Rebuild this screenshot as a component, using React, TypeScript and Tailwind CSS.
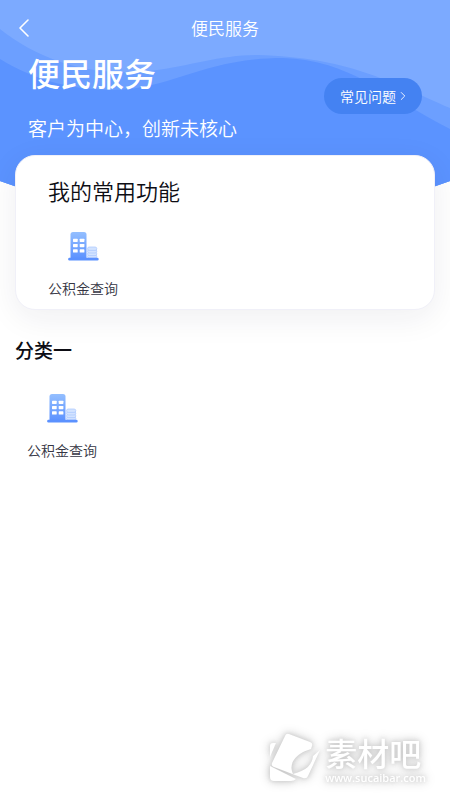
import { ChevronLeft, ChevronRight } from "lucide-react";

const favourites = ["公积金查询"]
const categories = [{ name: "分类一", services: ["公积金查询"] }]

function HeaderWaves() {
  return (
    <svg
      className="absolute inset-x-0 top-0 h-60 w-full"
      viewBox="0 0 450 240"
      preserveAspectRatio="none"
      aria-hidden="true"
    >
      <defs>
        <clipPath id="dome">
          <path d="M0 0H450V181Q340 222 225 222T0 181Z" />
        </clipPath>
      </defs>
      <g clipPath="url(#dome)">
        <rect width="450" height="240" fill="#7caaff" />
        <path
          d="M0 29C42 62 92 77 150 71C190 66 220 55 257 55C350 58 385 80 450 108V240H0Z"
          fill="#6c9fff"
        />
        <path
          d="M0 59C38 82 75 90 115 90C175 88 205 58 283 58C350 60 385 96 450 129V240H0Z"
          fill="#5b93ff"
        />
      </g>
    </svg>
  )
}

function BuildingIcon() {
  return (
    <svg width="32" height="32" viewBox="0 0 32 32" aria-hidden="true">
      <defs>
        <linearGradient id="tower" x1="0" y1="0" x2="0" y2="1">
          <stop offset="0" stopColor="#94bfff" />
          <stop offset="1" stopColor="#5b91ff" />
        </linearGradient>
      </defs>
      <path d="M3.5 29V4.5Q3.5 2 6 2H17Q19.5 2 19.5 4.5V29Z" fill="url(#tower)" />
      <g fill="#fff">
        <rect x="6" y="8.7" width="4.7" height="3.2" rx=".6" />
        <rect x="12.7" y="8.7" width="4.7" height="3.2" rx=".6" />
        <rect x="6" y="14" width="4.7" height="3.2" rx=".6" />
        <rect x="12.7" y="14" width="4.7" height="3.2" rx=".6" />
        <rect x="6" y="19.3" width="4.7" height="3.2" rx=".6" />
        <rect x="12.7" y="19.3" width="4.7" height="3.2" rx=".6" />
      </g>
      <g fill="#d3e3ff" stroke="#a9c7ff" strokeWidth=".7">
        <rect x="20.5" y="24.8" width="9.3" height="3.4" rx="1.7" />
        <rect x="20.5" y="22.2" width="9.3" height="3.4" rx="1.7" />
        <rect x="20.5" y="19.6" width="9.3" height="3.4" rx="1.7" />
        <rect x="20.5" y="17" width="9.3" height="3.4" rx="1.7" />
      </g>
      <rect x="1.2" y="27.7" width="30.4" height="2.8" rx="1.2" fill="#5b91ff" />
    </svg>
  )
}

function Service({ name }: { name: string }) {
  return (
    <button className="flex flex-col items-center gap-4 text-sm leading-5 text-[#363644]">
      <BuildingIcon />
      {name}
    </button>
  )
}

function Watermark() {
  return (
    <div className="absolute right-6 bottom-4 flex items-center gap-1 text-white [filter:drop-shadow(0_0_2px_#ccc)_drop-shadow(0_0_5px_#ccc)]">
      <svg width="52" height="52" viewBox="0 0 52 52" fill="currentColor" aria-hidden="true">
        <path d="M1 14Q1 11 4 11H7L1 25Z" />
        <path d="M1 34L27 47Q25 49 22 49H5Q1 49 1 45Z" />
        <path d="M16 4Q17 1 20 2L41 10Q44 11 43 14L42 17C31 20 18 29 24 42C38 38 43 33 44 24L51 18L39 44Q38 47 34 46L5 35Q2 34 3 31Z" />
      </svg>
      <div className="flex flex-col">
        <span className="text-[32px] leading-10 font-medium">素材吧</span>
        <span className="font-['Open_Sans',sans-serif] text-[11px] leading-3 font-semibold">www.sucaibar.com</span>
      </div>
    </div>
  )
}

export default function App() {
  return (
    <main className="relative min-h-screen bg-white pb-20 font-['Noto_Sans_CJK_SC',sans-serif] font-[350]">
      <HeaderWaves />
      <div className="relative">
        <header className="text-white">
          <nav className="grid h-14 grid-cols-[1fr_auto_1fr] items-center px-2">
            <button aria-label="返回" className="w-8">
              <ChevronLeft size={32} strokeWidth={1.2} />
            </button>
            <span className="text-[17px] leading-6">便民服务</span>
          </nav>
          <div className="flex items-center justify-between pr-7 pl-7">
            <div className="flex flex-col gap-6">
              <h1 className="text-[32px] leading-8 font-medium">便民服务</h1>
              <p className="text-[19px] leading-8">客户为中心，创新未核心</p>
            </div>
            <button className="mb-2 flex h-9 items-center rounded-full bg-[#4482f2] pr-3 pl-4 text-sm">
              常见问题
              <ChevronRight size={14} strokeWidth={1.5} />
            </button>
          </div>
        </header>

        <section className="mx-[15px] mt-[11px] rounded-[20px] border border-[#f0f0f8] bg-white px-8 pt-[18px] pb-[11px] shadow-[0_8px_32px_rgba(30,30,60,0.07)]">
          <h2 className="text-[22px] leading-8 text-[#0d0d14]">我的常用功能</h2>
          <div className="mt-6 flex flex-wrap gap-8">
            {favourites.map(name => <Service key={name} name={name} />)}
          </div>
        </section>

        {categories.map(c => (
          <section key={c.name} className="mt-6 px-[15px]">
            <h2 className="text-[19px] leading-8 font-medium text-[#0d0d14]">{c.name}</h2>
            <div className="mt-[26px] flex flex-wrap gap-8 px-3">
              {c.services.map(name => <Service key={name} name={name} />)}
            </div>
          </section>
        ))}
      </div>
      <Watermark />
    </main>
  )
}
